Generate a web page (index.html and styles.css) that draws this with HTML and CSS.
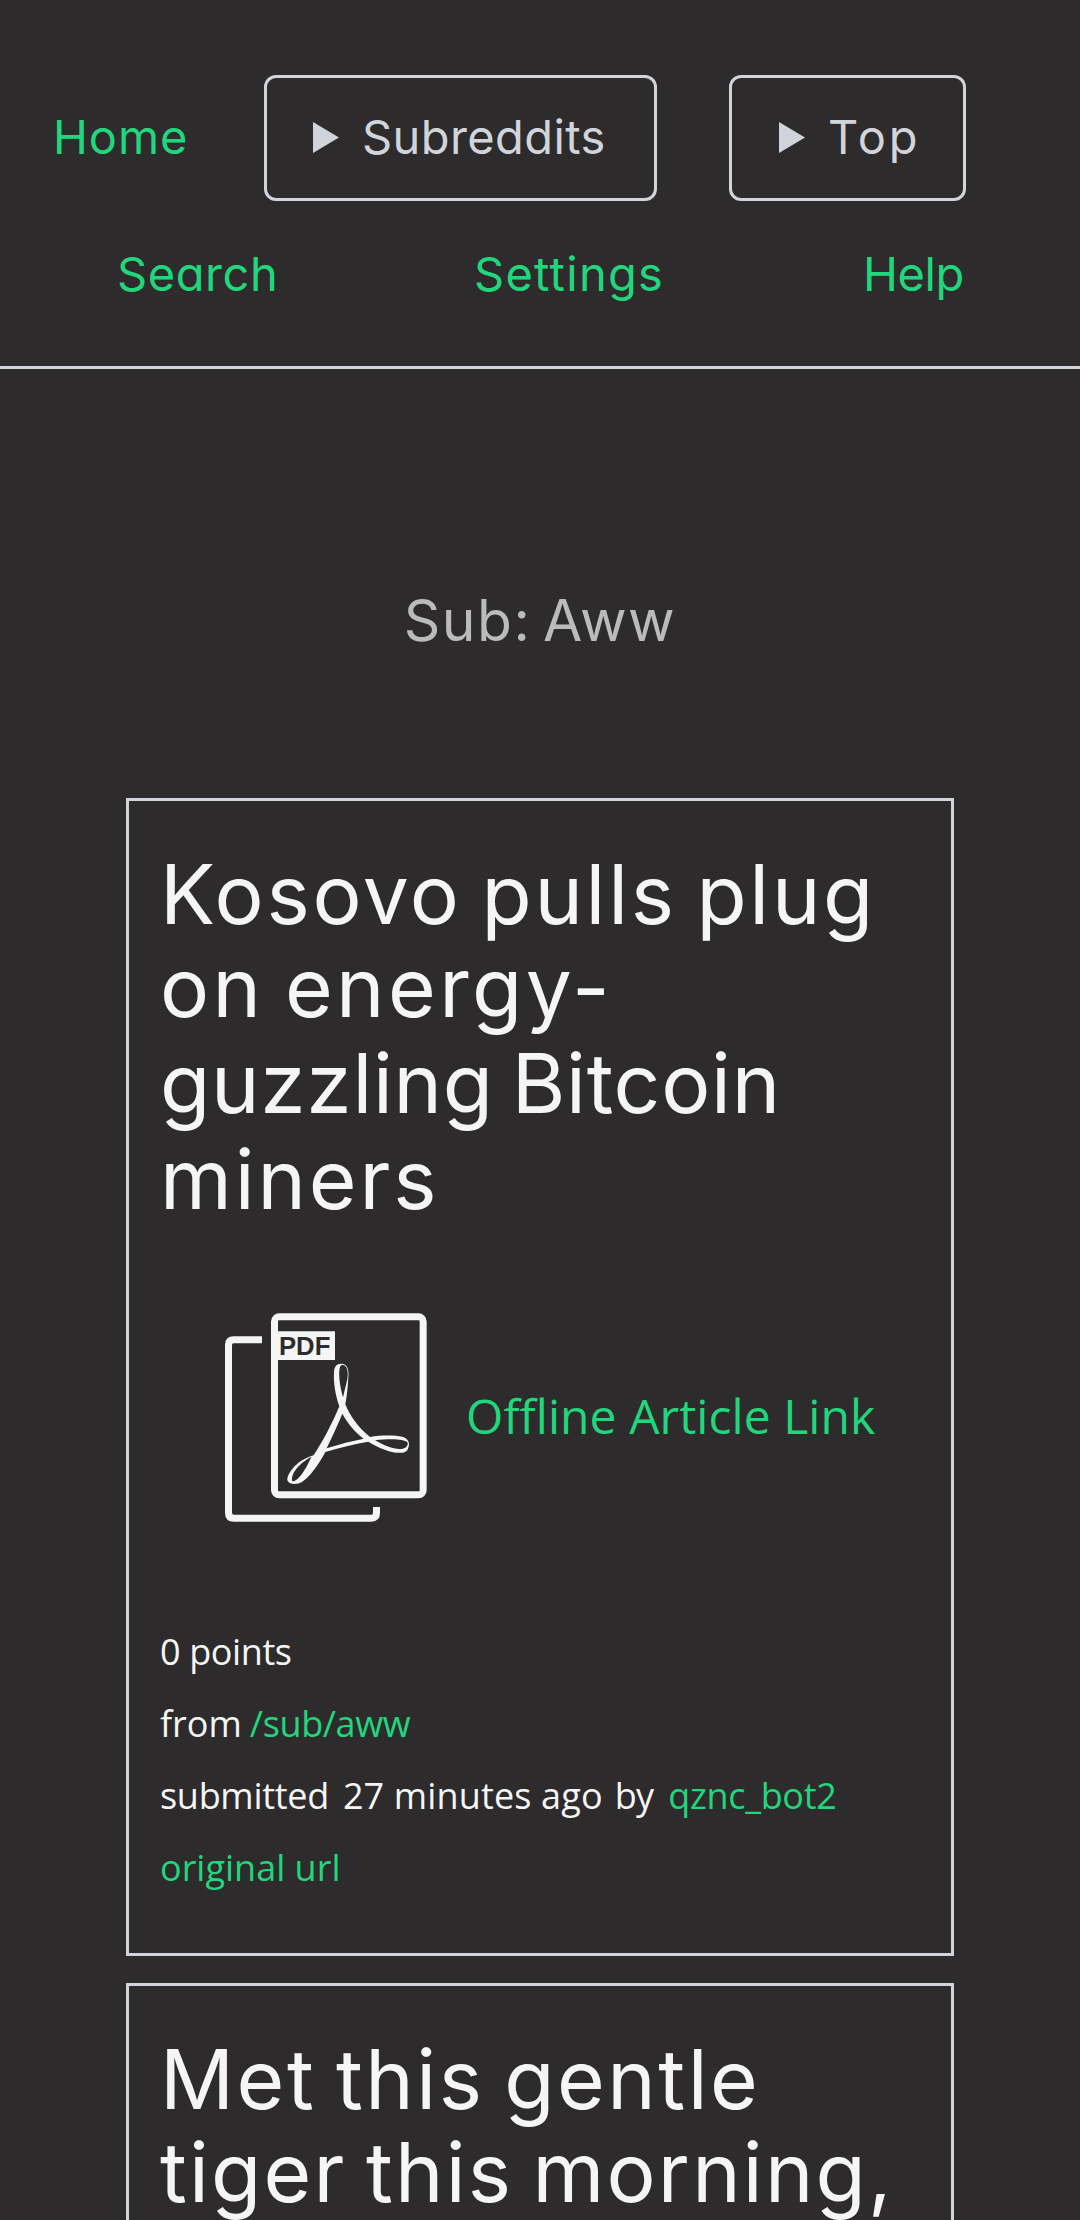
FILE: index.html
```html
<!DOCTYPE html>
<html lang="en">
<head>
<meta charset="utf-8">
<title>Sub: Aww</title>
<link rel="stylesheet" href="styles.css">
</head>
<body>
<header class="header">
  <nav class="nav-row">
    <a class="link nav-home">Home</a>
    <div class="dropdown dropdown-subs">
      <svg class="marker" viewBox="0 0 26 31"><path d="M0 0 26 15.5 0 31Z"/></svg>
      <span class="label-subs">Subreddits</span>
    </div>
    <div class="dropdown dropdown-top">
      <svg class="marker" viewBox="0 0 26 31"><path d="M0 0 26 15.5 0 31Z"/></svg>
      <span class="label-top">Top</span>
    </div>
  </nav>
  <nav class="nav-links">
    <a class="link nav-search">Search</a>
    <a class="link nav-settings">Settings</a>
    <a class="link nav-help">Help</a>
  </nav>
</header>
<main class="feed">
  <h1 class="heading">Sub: Aww</h1>
  <article class="card">
    <h2 class="title">
      <span class="line k1">Kosovo pulls plug</span>
      <span class="line k2">on energy-</span>
      <span class="line k3">guzzling Bitcoin</span>
      <span class="line k4">miners</span>
    </h2>
    <div class="article">
      <svg class="pdf" viewBox="75 66 606 630">
        <g fill="none" stroke="#f5f5f5" stroke-width="21">
          <rect x="223.500" y="80.500" width="446" height="534" rx="14"/>
          <path d="M186 149.500H101Q85.500 149.500 85.500 165V668Q85.500 684.500 102 684.500H514Q529.500 684.500 529.500 669V651"/>
        </g>
        <path fill="#f5f5f5" d="M224 124H405V210H224Z"/>
        <text class="pdf-text" x="237" y="194" textLength="154" lengthAdjust="spacingAndGlyphs">PDF</text>
        <path fill="#f5f5f5" fill-rule="evenodd" d="M424 221C441 221 448 239 445 262C444 285 441 315 436 343C449 377 475 413 510 441C546 435 584 436 607 440C619 443 628 453 627 464C625 478 620 487 607 488C578 492 538 475 505 455C462 462 418 473 376 486C356 524 329 561 306 576C292 584 269 584 263 573C257 558 284 523 307 511C320 504 331 498 341 496C365 459 397 401 418 349C406 315 400 277 402 247C403 230 409 221 424 221ZM425 225C413 231 417 278 429 322C433 304 439 282 442 267C447 240 438 222 425 225ZM427 371C415 401 399 435 380 475C419 462 455 453 491 446C462 424 441 397 427 371ZM525 451C556 469 586 480 608 476C620 474 626 464 622 457C613 446 565 446 525 451ZM334 500C300 519 271 549 277 574C297 574 321 531 334 500Z"/>
      </svg>
      <a class="link offline">Offline Article Link</a>
    </div>
    <div class="meta">
      <div class="meta-row"><span class="points">0 points</span></div>
      <div class="meta-row"><span>from</span><a class="link sub">/sub/aww</a></div>
      <div class="meta-row"><span class="submitted">submitted</span><span class="time">27 minutes ago</span><span class="by">by</span><a class="link author">qznc_bot2</a></div>
      <div class="meta-row"><a class="link">original url</a></div>
    </div>
  </article>
  <article class="card">
    <h2 class="title">
      <span class="line t1">Met this gentle</span>
      <span class="line t2">tiger this morning,</span>
    </h2>
  </article>
</main>
</body>
</html>
```
FILE: styles.css
```css
* { box-sizing: border-box; }
body {
  margin: 0;
  height: 2220px;
  overflow: hidden;
  background: #2d2b2c;
  color: #f5f5f5;
  font-family: "Open Sans", sans-serif;
}
.link { color: #21d67c; text-decoration: none; }

/* Header */
.header {
  height: 369px;
  padding: 75px 0 0 53px;
  border-bottom: 3px solid #d1d5db;
  font: 400 47px Inter, sans-serif;
  font-feature-settings: "cv11";
  white-space: nowrap;
}
.nav-row { display: flex; height: 126px; }
.nav-home { width: 211px; line-height: 123px; letter-spacing: .91px; }
.dropdown {
  display: flex;
  height: 126px;
  padding-left: 46px;
  border: 3px solid #d1d5db;
  border-radius: 12px;
  color: #d1d5db;
  line-height: 117px;
}
.dropdown-subs { width: 393px; }
.dropdown-top { width: 237px; margin-left: 72px; padding-left: 47px; }
.marker { width: 26px; height: 31px; margin: 44px 23px 0 0; fill: #d1d5db; flex: none; }
.label-subs { letter-spacing: .4px; }
.label-top { letter-spacing: 3px; }
.nav-links { display: flex; margin: 23px 0 0 64px; line-height: 100px; }
.nav-search { width: 357px; letter-spacing: .57px; }
.nav-settings { width: 389px; letter-spacing: 1.27px; }
.nav-help { letter-spacing: -.4px; }

/* Feed */
.feed { display: flex; flex-direction: column; }
.heading {
  margin: 212px 0 137px;
  color: #bbb;
  font: 400 57px/80px Inter, sans-serif;
  letter-spacing: 1.5px;
  word-spacing: -6px;
  text-align: center;
}
.card {
  width: 828px;
  margin: 0 auto 27px;
  padding: 47px 0 49px 31px;
  border: 3px solid #d1d5db;
}
.title {
  margin: 0;
  font: 400 82px/93px Inter, sans-serif;
  font-feature-settings: "cv11";
  word-spacing: -6px;
  white-space: nowrap;
}
.line { display: block; }
.k1 { letter-spacing: 2.7px; }
.k2 { letter-spacing: 3.4px; }
.k3 { letter-spacing: .76px; line-height: 99px; }
.k4 { letter-spacing: 2.9px; }
.t1 { letter-spacing: 2.54px; }
.t2 { letter-spacing: 2.2px; }

.article {
  display: flex;
  align-items: flex-start;
  gap: 39px;
  height: 390px;
  padding: 86px 0 0 65px;
}
.pdf { width: 202px; height: 210px; flex: none; }
.pdf-text { font: 700 79px "Liberation Sans", sans-serif; fill: #2d2b2c; }
.offline {
  font-size: 48px;
  line-height: 208px;
  letter-spacing: .05px;
  white-space: nowrap;
  font-variant-ligatures: none;
}

.meta { font-size: 36px; line-height: 72px; white-space: nowrap; }
.meta-row { display: flex; height: 72px; }
.points { letter-spacing: -.4px; }
.sub { margin-left: 8px; letter-spacing: -.37px; }
.submitted { letter-spacing: -.3px; }
.time { margin-left: 14px; letter-spacing: .14px; }
.by { margin-left: 12px; letter-spacing: -.8px; }
.author { margin-left: 15px; letter-spacing: -.31px; }
```
